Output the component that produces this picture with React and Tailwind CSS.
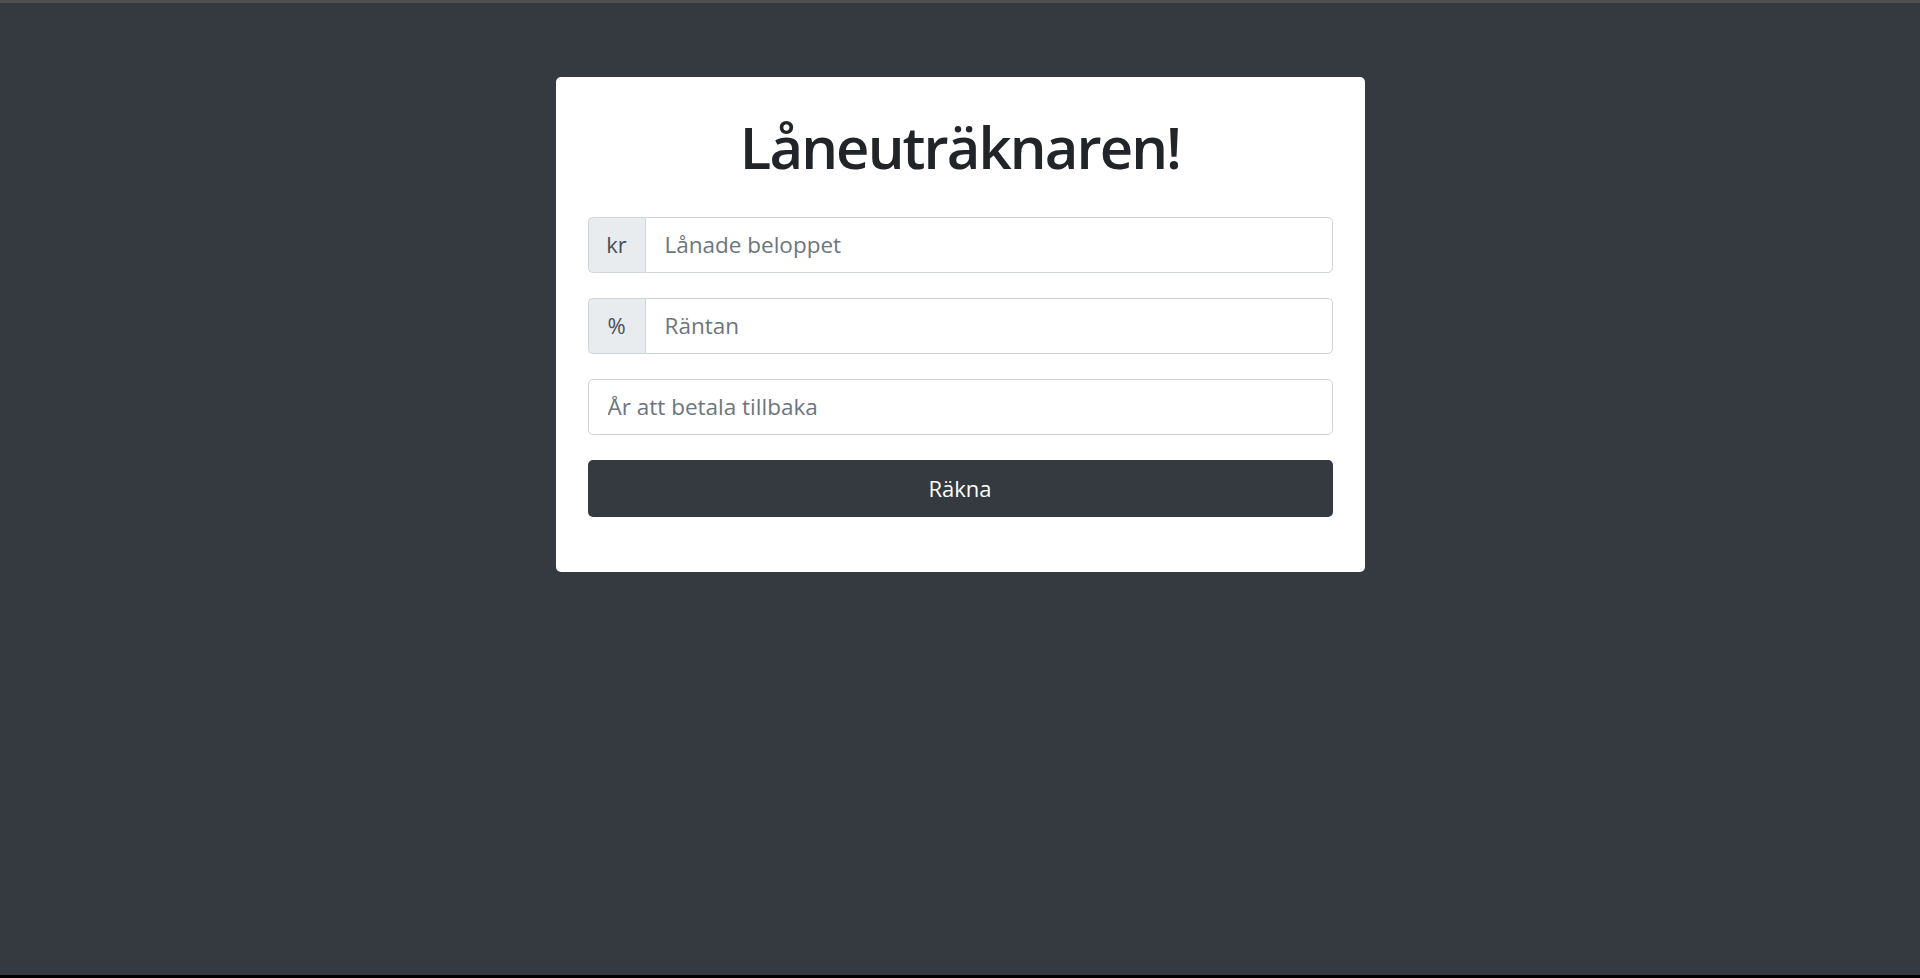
import React, { useState } from 'react';

const font = { fontFamily: '"Open Sans", "Noto Sans", sans-serif' };

const Field = ({ addon, placeholder, value, onChange }) => (
  <div className="flex h-[56px] w-full">
    {addon && (
      <span className="flex w-[57px] items-center justify-center rounded-l-[5px] border border-r-0 border-[#ced4da] bg-[#e9ecef] text-[22px] text-[#495057]">
        {addon}
      </span>
    )}
    <input
      type="text"
      value={value}
      onChange={onChange}
      placeholder={placeholder}
      className={`min-w-0 flex-1 border border-[#ced4da] bg-white px-[19px] text-[22.5px] text-[#495057] placeholder-[#6c757d] outline-none ${
        addon ? 'rounded-r-[5px]' : 'rounded-[5px]'
      }`}
    />
  </div>
);

export default function App() {
  const [amount, setAmount] = useState('');
  const [rate, setRate] = useState('');
  const [years, setYears] = useState('');

  return (
    <div className="flex h-[978px] w-full flex-col bg-[#343a40]" style={font}>
      <div className="h-[3px] w-full bg-[#4d4f52]" />
      <div className="flex-1">
        <div className="mx-auto mt-[74px] w-[809px] rounded-[5px] bg-white px-[32px] pb-[55px] pt-[35px]">
          <h1 className="mb-[35px] text-center text-[58px] font-semibold leading-[1.2] tracking-[-1.9px] text-[#212529]">
            Låneuträknaren!
          </h1>
          <div className="flex flex-col gap-[25px]">
            <Field addon="kr" placeholder="Lånade beloppet" value={amount} onChange={(e) => setAmount(e.target.value)} />
            <Field addon="%" placeholder="Räntan" value={rate} onChange={(e) => setRate(e.target.value)} />
            <Field placeholder="År att betala tillbaka" value={years} onChange={(e) => setYears(e.target.value)} />
            <button
              type="button"
              className="h-[57px] w-full rounded-[5px] bg-[#343a40] text-[22px] text-white"
            >
              Räkna
            </button>
          </div>
        </div>
      </div>
      <div className="h-[3px] w-full bg-black" />
    </div>
  );
}
